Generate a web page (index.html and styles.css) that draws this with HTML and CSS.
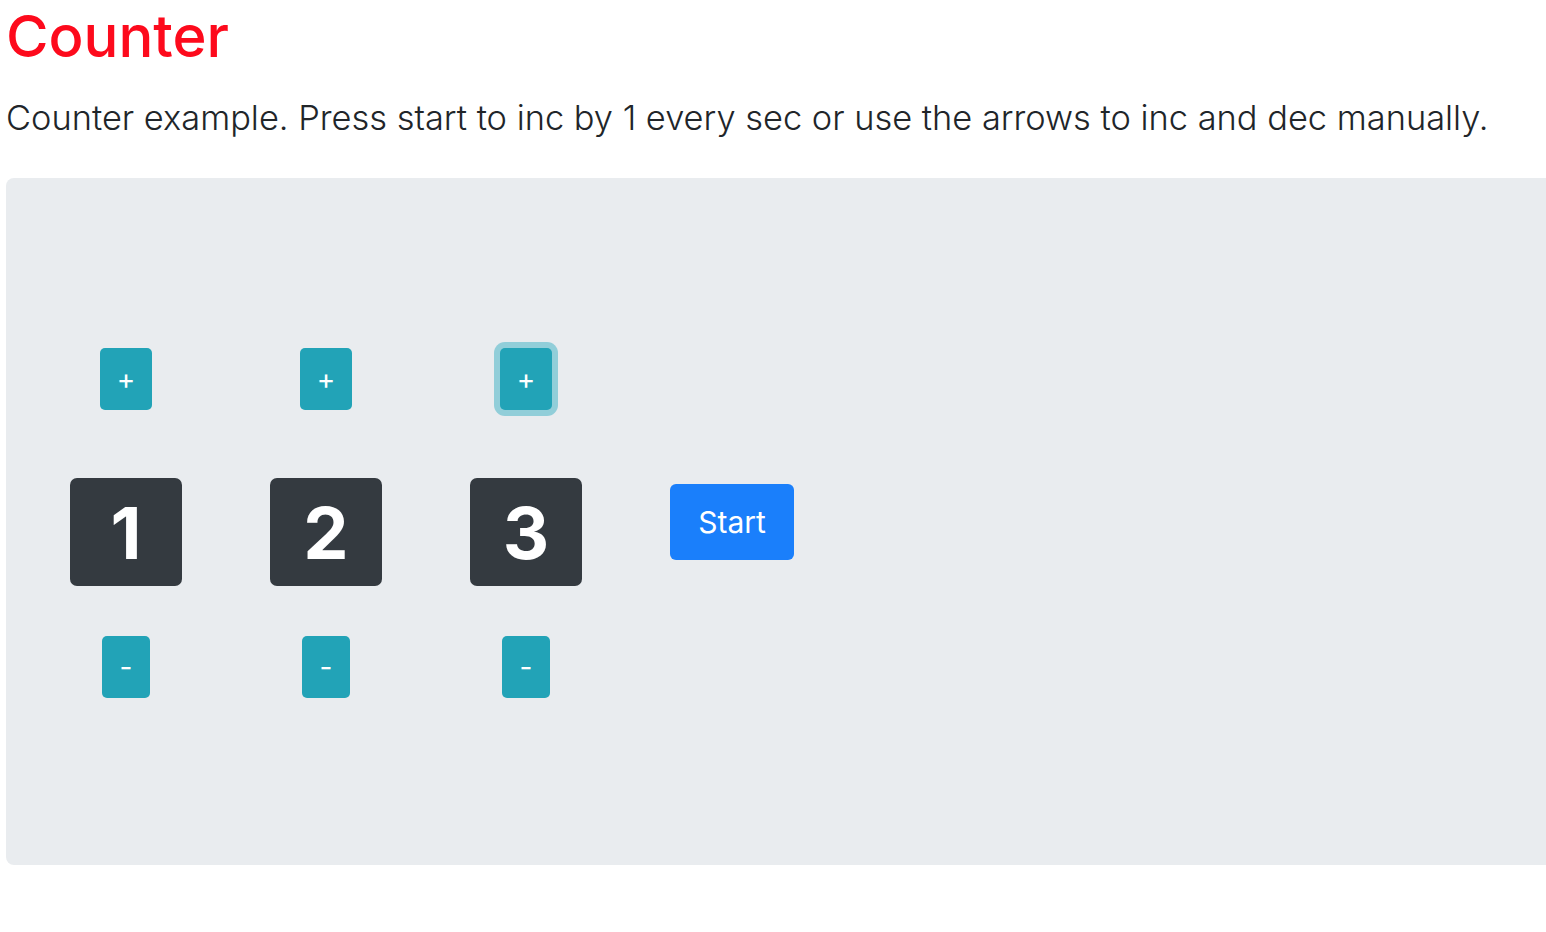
FILE: index.html
```html
<!DOCTYPE html>
<html lang="en">
<head>
<meta charset="utf-8">
<title>Counter</title>
<link rel="stylesheet" href="styles.css">
</head>
<body>
<div class="page">
  <h1 class="title">Counter</h1>
  <p class="lead">Counter example. Press start to inc by 1 every sec or use the arrows to inc and dec manually.</p>
  <div class="jumbo">
    <div class="row">
      <div class="digit-col">
        <button class="btn-info btn-plus">+</button>
        <div class="digit">1</div>
        <button class="btn-info btn-minus">-</button>
      </div>
      <div class="digit-col">
        <button class="btn-info btn-plus">+</button>
        <div class="digit">2</div>
        <button class="btn-info btn-minus">-</button>
      </div>
      <div class="digit-col">
        <button class="btn-info btn-plus focused">+</button>
        <div class="digit">3</div>
        <button class="btn-info btn-minus">-</button>
      </div>
      <button class="btn-start">Start</button>
    </div>
  </div>
</div>
</body>
</html>
```

FILE: styles.css
```css
html, body {
  margin: 0;
  padding: 0;
  overflow: hidden;
  background: #fff;
}
body {
  font-family: Inter, "Noto Sans", "Liberation Sans", sans-serif;
  color: #212529;
}
.page {
  padding-left: 6px;
}
.title {
  margin: 0 0 24px 0;
  font-size: 58px;
  line-height: 72px;
  font-weight: 500;
  color: #fd0a1c;
}
.lead {
  margin: 0 0 38px 0;
  font-size: 34.4px;
  line-height: 44px;
  font-weight: 300;
}
.jumbo {
  width: 1600px;
  height: 687px;
  box-sizing: border-box;
  background: #e9ecef;
  border-radius: 8px;
}
.row {
  height: 100%;
  display: flex;
  align-items: center;
  padding-left: 64px;
  gap: 88px;
}
.digit-col {
  width: 112px;
  display: flex;
  flex-direction: column;
  align-items: center;
  padding-top: 3px;
}
.btn-info {
  border: none;
  margin: 0;
  padding: 0;
  height: 62px;
  background: #22a3b7;
  color: #fff;
  font-family: inherit;
  font-size: 28px;
  border-radius: 5px;
  display: flex;
  align-items: center;
  justify-content: center;
}
.btn-plus {
  width: 52px;
  margin-bottom: 68px;
}
.btn-minus {
  width: 48px;
  margin-top: 50px;
}
.focused {
  box-shadow: 0 0 0 6px rgba(58, 176, 195, 0.5);
}
.digit {
  width: 112px;
  height: 108px;
  background: #343a40;
  border-radius: 7px;
  color: #fff;
  font-size: 72px;
  font-weight: 700;
  display: flex;
  align-items: center;
  justify-content: center;
}
.btn-start {
  border: none;
  margin: 0;
  width: 124px;
  height: 76px;
  background: #1a7ffb;
  color: #fff;
  font-family: inherit;
  font-size: 30px;
  border-radius: 6px;
}
```
